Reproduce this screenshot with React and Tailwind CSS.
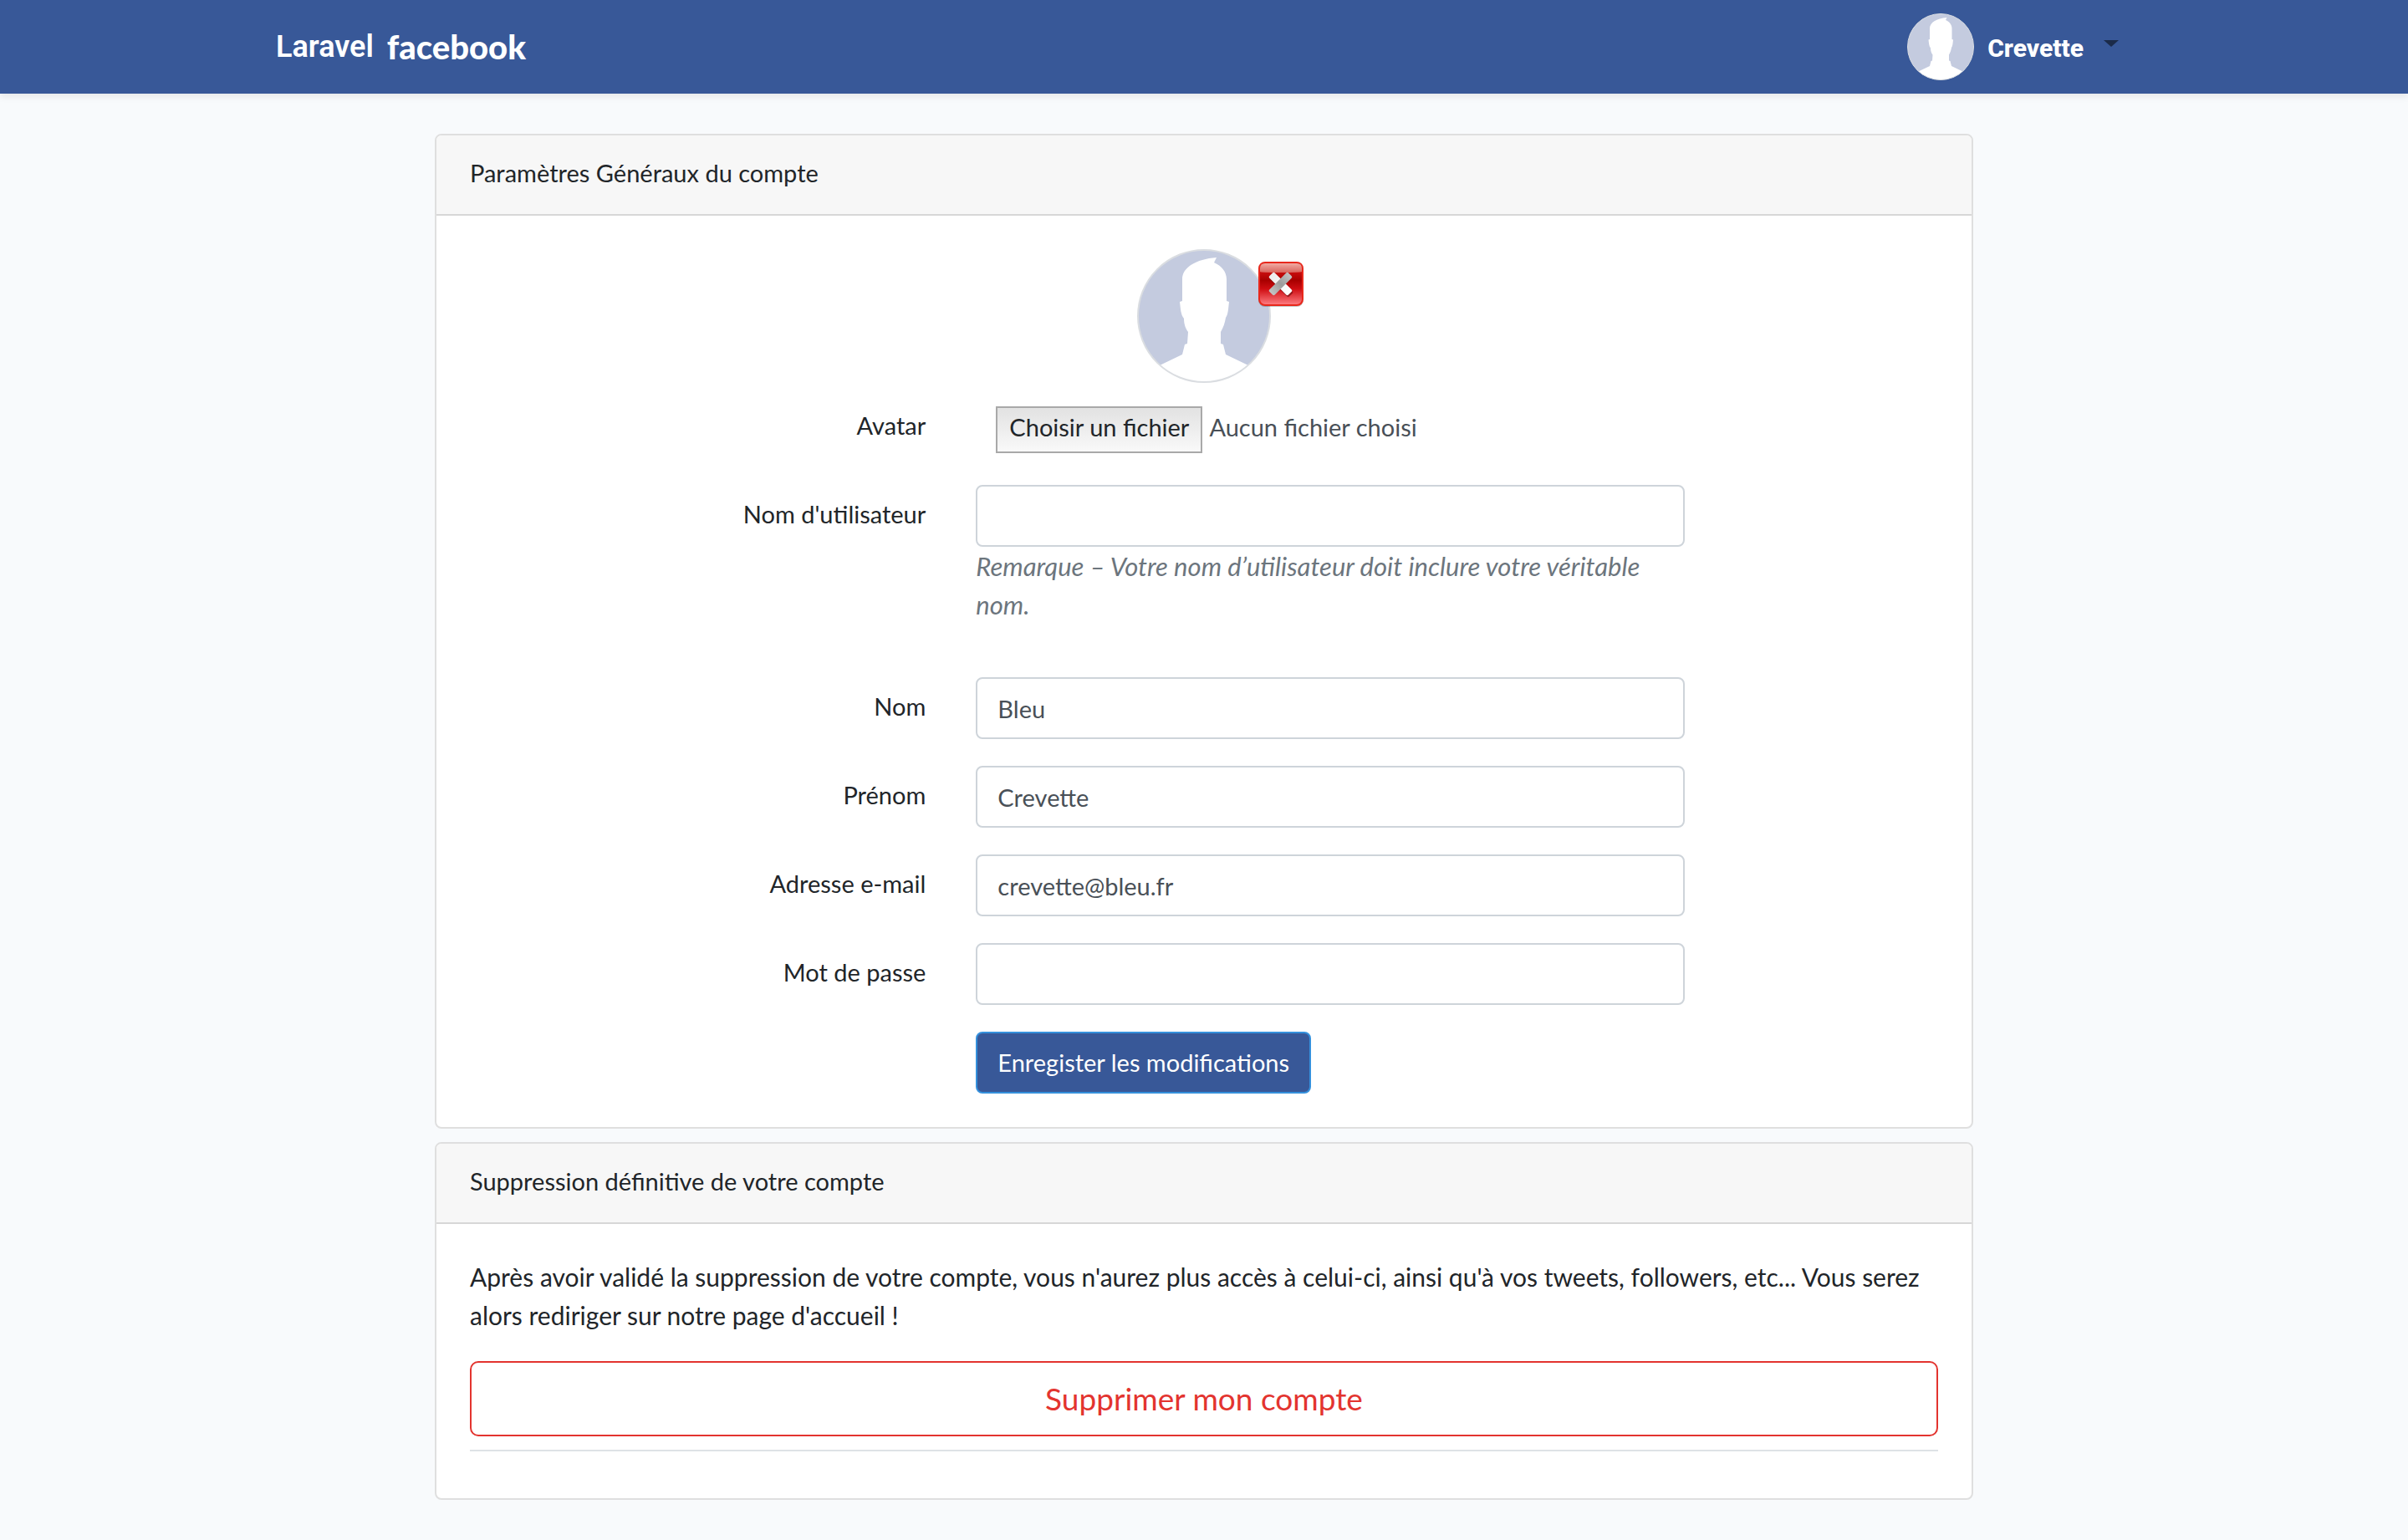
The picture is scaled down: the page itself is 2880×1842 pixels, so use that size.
import React from "react";

function Silhouette({ className }) {
  return (
    <svg viewBox="0 0 160 160" className={className} aria-hidden="true">
      <defs>
        <clipPath id="avatar-disc">
          <circle cx="80" cy="80" r="79" />
        </clipPath>
      </defs>
      <g clipPath="url(#avatar-disc)">
        <rect width="160" height="160" fill="#c4cbdf" />
        <path
          fill="#ffffff"
          d="M95 10 L92 16 C101 20 107 27 107 36 V62 L110 63 C109 71 109 78 106 82 C105 88 103 94 100 99 V113 L103 114 L106 126 L160 152 V160 H0 V152 L54 126 L57 114 L60 113 L61 99 C58 95 56 90 56 83 C52 78 52 71 51 63 L54 62 V36 C54 22 70 12 95 10 Z"
        />
      </g>
      <circle cx="80" cy="80" r="79" fill="none" stroke="#dadde1" strokeWidth="2" />
    </svg>
  );
}

function DeleteIcon({ className }) {
  return (
    <svg viewBox="0 0 56 56" className={className} aria-hidden="true">
      <defs>
        <linearGradient id="red-body" x1="0" y1="0" x2="0" y2="1">
          <stop offset="0.2" stopColor="#cc1010" />
          <stop offset="0.42" stopColor="#a80000" />
          <stop offset="0.62" stopColor="#cf0d12" />
          <stop offset="1" stopColor="#ff7f84" />
        </linearGradient>
        <linearGradient id="red-gloss" x1="0" y1="0" x2="0" y2="1">
          <stop offset="0" stopColor="#f0aaa2" />
          <stop offset="1" stopColor="#d8645c" />
        </linearGradient>
        <linearGradient id="bar-light" x1="0" y1="0" x2="1" y2="0">
          <stop offset="0" stopColor="#ececec" />
          <stop offset="1" stopColor="#ffffff" />
        </linearGradient>
        <linearGradient id="bar-dark" x1="0" y1="0" x2="1" y2="0">
          <stop offset="0" stopColor="#c4c4c4" />
          <stop offset="0.5" stopColor="#9c9c9c" />
          <stop offset="1" stopColor="#c2c2c2" />
        </linearGradient>
      </defs>
      <rect x="1" y="2" width="54" height="53" rx="8" fill="#000000" opacity="0.22" />
      <rect x="2" y="2" width="52" height="51" rx="7" fill="url(#red-body)" stroke="#e8281c" strokeWidth="2" />
      <path d="M3 13 V9 Q3 3 9 3 H47 Q53 3 53 9 V13 Q51 14 28 14 T3 13 Z" fill="url(#red-gloss)" />
      <g transform="translate(27.5 27.5)">
        <rect x="-16" y="-4.5" width="32" height="9" rx="2" fill="#500000" opacity="0.5" transform="translate(1 2) rotate(45)" />
        <rect x="-16" y="-4.5" width="32" height="9" rx="2" fill="url(#bar-light)" transform="rotate(45)" />
        <rect x="-16" y="-4.5" width="32" height="9" rx="2" fill="url(#bar-dark)" transform="rotate(-45)" />
      </g>
    </svg>
  );
}

function Card({ title, children }) {
  return (
    <section className="overflow-hidden rounded-lg border-2 border-[#dfdfdf] bg-white">
      <h2 className="border-b-2 border-[#d7d7d7] bg-[#f7f7f7] px-10 pt-[22px] pb-[26px]">{title}</h2>
      <div className="p-10">{children}</div>
    </section>
  );
}

function Row({ id, label, children }) {
  return (
    <div className="-mx-[30px] mb-8 flex">
      <label htmlFor={id} className="w-1/3 px-[30px] pt-3 text-right">
        {label}
      </label>
      <div className="w-1/2 px-[30px]">{children}</div>
    </div>
  );
}

function Field({ id, type = "text", value }) {
  return (
    <input
      id={id}
      type={type}
      defaultValue={value}
      className="block h-[74px] w-full rounded-lg border-2 border-[#ced4da] bg-white px-6 text-[#495057] outline-none"
    />
  );
}

export default function App() {
  return (
    <div className="min-h-screen bg-[#f8fafc] font-['Lato',sans-serif] text-[29px] leading-[46px] text-[#212529]">
      <nav className="bg-[#385898] shadow-[0_4px_8px_rgba(0,0,0,0.075)]">
        <div className="mx-auto flex h-28 max-w-[2280px] items-center justify-between px-[30px]">
          <a href="#" className="flex items-center gap-4 text-white">
            <span className="font-['Roboto',sans-serif] text-[36px] font-semibold">Laravel</span>
            <span className="font-['Lato',sans-serif] text-[40px] font-black">facebook</span>
          </a>
          <button type="button" className="flex items-center gap-4 pr-4 text-white">
            <Silhouette className="size-20" />
            <span className="pt-1 font-['Roboto',sans-serif] text-[30px] font-extrabold">Crevette</span>
            <svg viewBox="0 0 18 8" className="mb-2 ml-2 h-2 w-[18px]" aria-hidden="true">
              <path d="M0 0H18L9 8Z" fill="#1b2b49" />
            </svg>
          </button>
        </div>
      </nav>

      <main className="mx-auto flex max-w-[1840px] flex-col gap-4 py-12">
        <Card title="Paramètres Généraux du compte">
          <form>
            <div className="mb-4 flex justify-center">
              <div className="relative">
                <Silhouette className="size-40" />
                <button type="button" aria-label="Supprimer l'avatar" className="absolute -right-10 top-[14px]">
                  <DeleteIcon className="size-14" />
                </button>
              </div>
            </div>

            <Row id="avatar" label="Avatar">
              <div className="flex h-[74px] items-center gap-2 px-6 pt-[6px]">
                <input id="avatar" type="file" className="sr-only" />
                <label
                  htmlFor="avatar"
                  className="border-2 border-[#a9a9a9] bg-linear-to-b from-[#e2e2e2] to-[#f9f9f9] px-[14px] pb-[6px]"
                >
                  Choisir un fichier
                </label>
                <span className="pb-[6px] text-[#495057]">Aucun fichier choisi</span>
              </div>
            </Row>
            <Row id="username" label="Nom d'utilisateur">
              <Field id="username" />
              <p className="mb-8 text-[31px] italic text-[#6c757d]">
                Remarque – Votre nom d’utilisateur doit inclure votre véritable nom.
              </p>
            </Row>
            <Row id="nom" label="Nom">
              <Field id="nom" value="Bleu" />
            </Row>
            <Row id="prenom" label="Prénom">
              <Field id="prenom" value="Crevette" />
            </Row>
            <Row id="email" label="Adresse e-mail">
              <Field id="email" type="email" value="crevette@bleu.fr" />
            </Row>
            <Row id="password" label="Mot de passe">
              <Field id="password" type="password" />
            </Row>
            <div className="-mx-[30px] flex">
              <div className="ml-[33.3333%] px-[30px]">
                <button
                  type="submit"
                  className="h-[74px] rounded-lg border-2 border-[#3490dc] bg-[#385898] px-6 text-white"
                >
                  Enregister les modifications
                </button>
              </div>
            </div>
          </form>
        </Card>

        <Card title="Suppression définitive de votre compte">
          <p className="mb-8 text-[30px]">
            Après avoir validé la suppression de votre compte, vous n'aurez plus accès à celui-ci, ainsi qu'à vos
            tweets, followers, etc... Vous serez alors rediriger sur notre page d'accueil !
          </p>
          <button
            type="button"
            className="h-[90px] w-full rounded-[10px] border-2 border-[#e3342f] text-[37px] text-[#e3342f]"
          >
            Supprimer mon compte
          </button>
          <hr className="mb-4 mt-4 border-t-2 border-[#dee2e6]" />
        </Card>
      </main>
    </div>
  );
}
